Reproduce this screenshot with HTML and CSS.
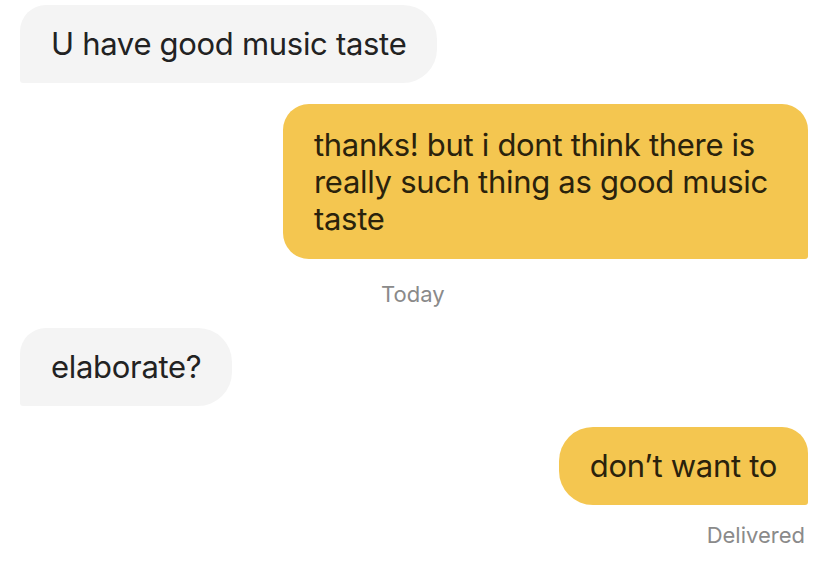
FILE: index.html
```html
<!DOCTYPE html>
<html>
<head>
<meta charset="utf-8">
<link rel="stylesheet" href="styles.css">
</head>
<body>
<div class="chat">
  <div class="row in first"><div class="bubble recv">U have good music taste</div></div>
  <div class="row out gap"><div class="bubble sent wide">thanks! but i dont think there is really such thing as good music taste</div></div>
  <div class="stamp today">Today</div>
  <div class="row in"><div class="bubble recv">elaborate?</div></div>
  <div class="row out gap"><div class="bubble sent">don’t want to</div></div>
  <div class="stamp delivered">Delivered</div>
</div>
</body>
</html>
```
FILE: styles.css
```css
html, body {
  margin: 0;
  padding: 0;
  background: #ffffff;
}
body {
  font-family: Inter, "Noto Sans", sans-serif;
  width: 828px;
  height: 571px;
  overflow: hidden;
}
.chat {
  display: flex;
  flex-direction: column;
  padding: 5px 20px 0 20px;
}
.row {
  display: flex;
}
.row.in { justify-content: flex-start; }
.row.out { justify-content: flex-end; }
.row.gap { margin-top: 21px; }
.bubble {
  font-size: 31px;
  line-height: 37px;
  padding: 20px 31px 21px 31px;
  letter-spacing: -0.3px;
}
.recv {
  background: #f4f4f4;
  color: #222222;
  border-radius: 26px 34px 34px 3px;
}
.sent {
  background: #f4c650;
  color: #2a220c;
  border-radius: 34px 26px 3px 34px;
}
.wide {
  width: 463px;
  padding-top: 22px;
  padding-bottom: 22px;
  border-radius: 26px 26px 3px 26px;
}
.stamp {
  font-size: 22px;
  color: #8a8a8a;
  line-height: 24px;
}
.today {
  margin-top: 23px;
  margin-bottom: 22px;
  padding-left: 361px;
}
.delivered {
  margin-top: 18px;
  text-align: right;
  padding-right: 3px;
}
```
